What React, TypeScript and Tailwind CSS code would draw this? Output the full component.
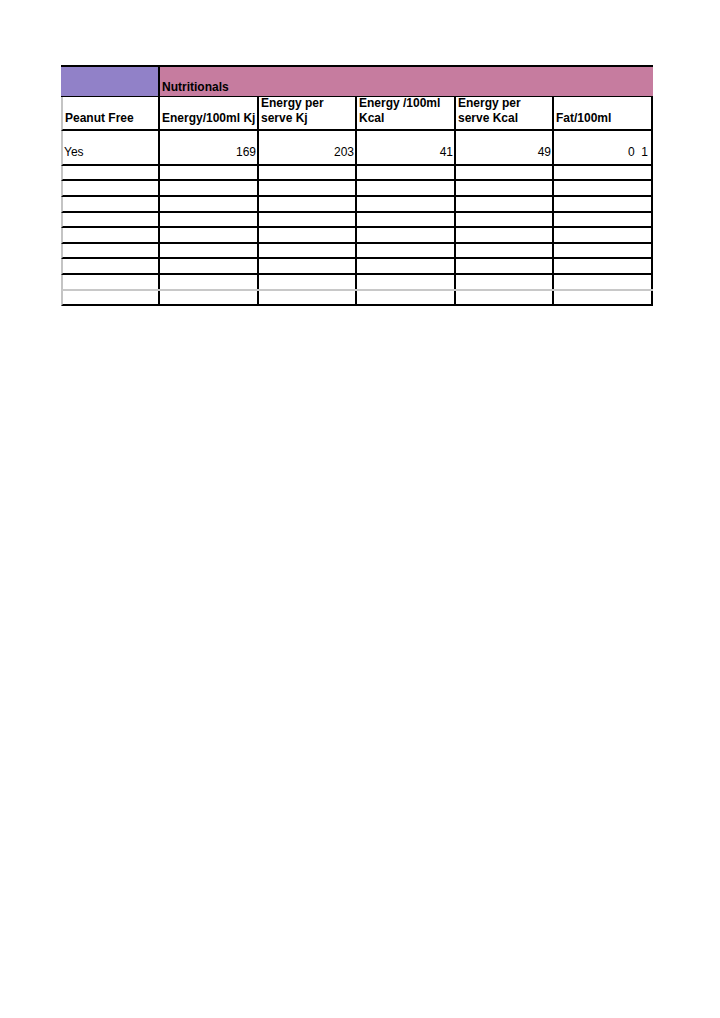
const font = { fontFamily: '"Liberation Sans", Arial, sans-serif' };

const widths = ["w-[97px]", "w-[99px]", "w-[98px]", "w-[99px]", "w-[98px]", "w-[99px]"];

const headers: string[][] = [
  ["Peanut Free"],
  ["Energy/100ml Kj"],
  ["Energy per", "serve Kj"],
  ["Energy /100ml", "Kcal"],
  ["Energy per", "serve Kcal"],
  ["Fat/100ml"],
];

const values = ["Yes", "169", "203", "41", "49", "0  1"];

const emptyRows = [
  "h-[15px]",
  "h-[16px]",
  "h-[16px]",
  "h-[15px]",
  "h-[16px]",
  "h-[15px]",
  "h-[16px]",
  "h-[16px]",
  "h-[15px]",
];

export default function App() {
  return (
    <div className="min-h-screen bg-white text-black" style={font}>
      <div className="pt-[65px] pl-[61px]">
        <div className="w-[592px]">
          {/* colour band */}
          <div className="flex h-[32px] border-t-2 border-b border-black">
            <div className="w-[99px] bg-[#9181c8] border-r-2 border-black" />
            <div className="flex-1 bg-[#c67c9f] flex items-end pl-[2px] pb-[1px]">
              <span className="text-[12px] font-bold leading-[15px]">Nutritionals</span>
            </div>
          </div>

          {/* header row */}
          <div className="flex h-[34px] border-l-2 border-b-2 border-l-[#c4c4c4] border-b-black">
            {headers.map((lines, i) => (
              <div
                key={i}
                className={`${widths[i]} border-r-2 border-black flex flex-col justify-end pl-[2px] pb-[3px]`}
              >
                {lines.map((l) => (
                  <span key={l} className="text-[12px] font-bold leading-[15px] whitespace-nowrap">
                    {l}
                  </span>
                ))}
              </div>
            ))}
          </div>

          {/* data row */}
          <div className="flex h-[35px] border-l-2 border-b-2 border-l-[#c4c4c4] border-b-black">
            {values.map((v, i) => (
              <div
                key={i}
                className={`${widths[i]} border-r-2 border-black flex items-end pb-[4px] ${
                  i === 0 ? "justify-start pl-[1px]" : i === 5 ? "justify-end pr-[3px]" : "justify-end pr-[1px]"
                }`}
              >
                <span className="text-[12px] leading-[15px] whitespace-pre">{v}</span>
              </div>
            ))}
          </div>

          {/* empty rows */}
          {emptyRows.map((h, r) => (
            <div
              key={r}
              className={`flex ${h} border-l-2 border-b-2 border-l-[#c4c4c4] ${
                r === 7 ? "border-b-[#c8c8c8]" : "border-b-black"
              }`}
            >
              {widths.map((w, i) => (
                <div key={i} className={`${w} border-r-2 border-black`} />
              ))}
            </div>
          ))}
        </div>
      </div>
    </div>
  );
}
